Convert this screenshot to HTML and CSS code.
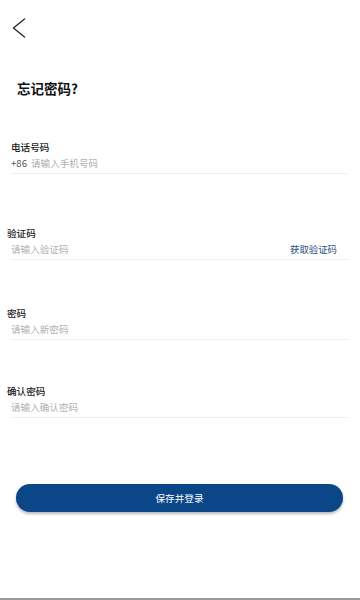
FILE: index.html
```html
<!DOCTYPE html>
<html lang="zh-CN">
<head>
<meta charset="utf-8">
<meta name="viewport" content="width=device-width, initial-scale=1">
<title>忘记密码</title>
<link rel="stylesheet" href="styles.css">
</head>
<body>
<div class="page">
  <header class="header">
    <svg class="back" width="14" height="20" viewBox="0 0 14 20" aria-hidden="true">
      <path d="M12.5 1 L1.5 10 L12.5 19" fill="none" stroke="#2b2b2b" stroke-width="1.4" stroke-linecap="round" stroke-linejoin="miter"/>
    </svg>
  </header>
  <h1 class="title">忘记密码?</h1>
  <form class="form">
    <div class="field">
      <div class="label">电话号码</div>
      <div class="row"><span class="prefix">+86</span><span class="ph">请输入手机号码</span></div>
    </div>
    <div class="field field-code">
      <div class="label label-shift">验证码</div>
      <div class="row"><span class="ph">请输入验证码</span><span class="get-code">获取验证码</span></div>
    </div>
    <div class="field field-pwd">
      <div class="label label-shift">密码</div>
      <div class="row"><span class="ph">请输入新密码</span></div>
    </div>
    <div class="field field-confirm">
      <div class="label label-shift">确认密码</div>
      <div class="row"><span class="ph">请输入确认密码</span></div>
    </div>
  </form>
  <button class="submit" type="button">保存并登录</button>
  <div class="bottom-bar"></div>
</div>
</body>
</html>
```
FILE: styles.css
```css
* { box-sizing: border-box; }
html, body { margin: 0; padding: 0; background: #fff; }
body {
  font-family: "Noto Sans CJK SC", "Noto Sans", "Liberation Sans", sans-serif;
  color: #222;
}
.page {
  min-height: 600px;
  display: flex;
  flex-direction: column;
}
.header {
  padding: 18px 0 0 12px;
  height: 38px;
}
.back { display: block; }
.title {
  margin: 40px 0 0 17px;
  font-size: 13.5px;
  line-height: 20px;
  font-weight: 700;
  color: #111;
}
.form {
  margin-top: 42px;
  display: flex;
  flex-direction: column;
}
.field {
  margin: 0 12px 0 11px;
}
.field.field-code { margin-top: 52px; }
.field.field-pwd { margin-top: 46px; }
.field.field-confirm { margin-top: 44px; }
.label {
  font-size: 9.6px;
  line-height: 14px;
  font-weight: 500;
  color: #1a1a1a;
}
.label-shift { margin-left: -4px; }
.row {
  display: flex;
  align-items: center;
  padding: 2px 0 3px;
  line-height: 14px;
  font-size: 9.6px;
  border-bottom: 1px solid #eeeeee;
}
.prefix {
  color: #555;
  margin-right: 4px;
}
.ph { color: #b0b0b0; }
.get-code {
  margin-left: auto;
  margin-right: 11px;
  color: #1f4c84;
  font-size: 9.4px;
}
.submit {
  margin: 66px 17px 0 16px;
  height: 28px;
  border: 0;
  border-radius: 14px;
  background: #0b4689;
  color: #fff;
  font-family: inherit;
  font-size: 9.6px;
  box-shadow: 0 2px 3px rgba(0, 0, 0, 0.28);
  padding: 0;
}
.bottom-bar {
  margin-top: auto;
  height: 2px;
  background: #9a9a9a;
}
```
